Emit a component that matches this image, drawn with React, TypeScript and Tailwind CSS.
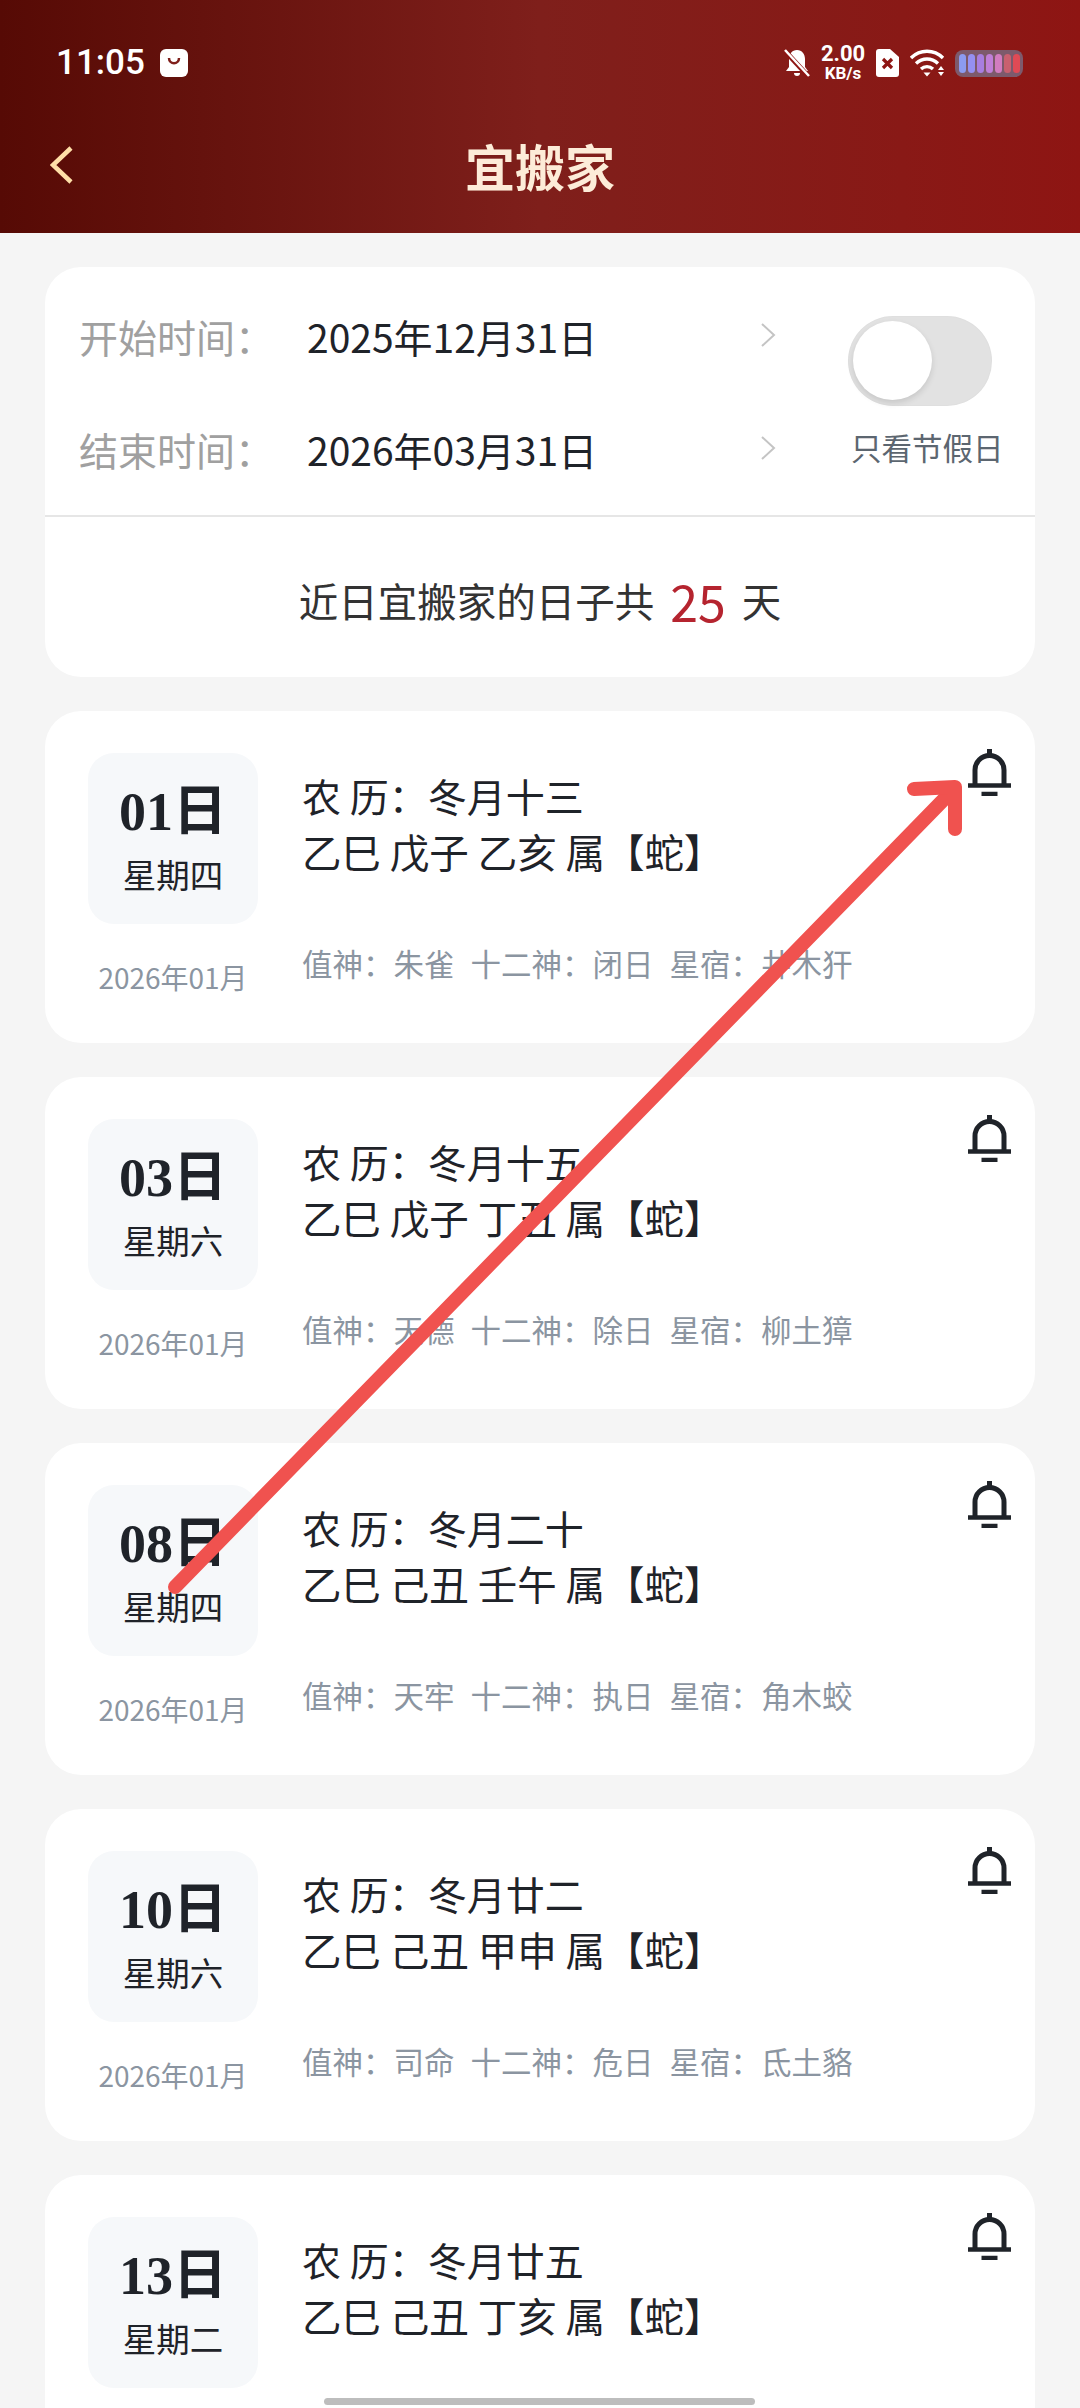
import React from 'react';

const days = [
  { day: '01日', week: '星期四', lunar: '冬月十三', ganzhi: '乙巳 戊子 乙亥 属【蛇】', shen: '朱雀', twelve: '闭日', star: '井木犴' },
  { day: '03日', week: '星期六', lunar: '冬月十五', ganzhi: '乙巳 戊子 丁丑 属【蛇】', shen: '天德', twelve: '除日', star: '柳土獐' },
  { day: '08日', week: '星期四', lunar: '冬月二十', ganzhi: '乙巳 己丑 壬午 属【蛇】', shen: '天牢', twelve: '执日', star: '角木蛟' },
  { day: '10日', week: '星期六', lunar: '冬月廿二', ganzhi: '乙巳 己丑 甲申 属【蛇】', shen: '司命', twelve: '危日', star: '氐土貉' },
  { day: '13日', week: '星期二', lunar: '冬月廿五', ganzhi: '乙巳 己丑 丁亥 属【蛇】', shen: '', twelve: '', star: '' },
];

function BellIcon() {
  return (
    <svg width="45" height="47" viewBox="0 0 45 47" fill="none" stroke="#1f2329" strokeWidth="5">
      <path d="M22.5 0v6" />
      <path d="M8 36V21a14.500 14.500 0 0 1 29 0v15" />
      <path d="M1 36.500h43" strokeWidth="4.500" />
      <path d="M14.500 45h16" strokeWidth="4.500" />
    </svg>
  );
}

function Chevron() {
  return (
    <svg width="16" height="24" viewBox="0 0 16 24" fill="none" stroke="#c4c4c4" strokeWidth="2">
      <path d="M2 1l12 11L2 23" />
    </svg>
  );
}

function StatusIcons() {
  return (
    <div className="flex items-center h-[36px]">
      {/* bell muted */}
      <svg width="26" height="29" viewBox="0 0 26 29" fill="#fff">
        <path d="M13 1c5 0 8 4 8 9v8l3 4H2l3-4v-8c0-5 3-9 8-9z" />
        <path d="M10 24h6a3 3 0 0 1-6 0z" />
        <path d="M1 2l24 26" stroke="#8e1513" strokeWidth="5" />
        <path d="M1 1l24 26" stroke="#fff" strokeWidth="2.5" />
      </svg>
      <div className="ml-[10px] w-[46px] flex flex-col items-center font-['Roboto',sans-serif] font-bold text-white">
        <span className="text-[22px] leading-[20px]">2.00</span>
        <span className="text-[17px] leading-[18px]">KB/s</span>
      </div>
      {/* sim */}
      <svg className="ml-[10px]" width="23" height="28" viewBox="0 0 23 28">
        <path d="M3 0h11l9 8v17a3 3 0 0 1-3 3H3a3 3 0 0 1-3-3V3a3 3 0 0 1 3-3z" fill="#fff" />
        <path d="M7 10l9 9M16 10l-9 9" stroke="#8e1513" strokeWidth="3.2" />
      </svg>
      {/* wifi */}
      <svg className="ml-[11px]" width="36" height="28" viewBox="0 0 36 28" fill="none" stroke="#fff" strokeWidth="3.4">
        <path d="M1 9C10 0 24 0 33 9" />
        <path d="M6 14.500c6.500-6 15.500-6 22 0" />
        <path d="M11 20c3.500-3.200 8.500-3.200 12 0" />
        <path d="M13.500 23.500h7l-3.500 4z" fill="#fff" stroke="none" />
        <path d="M28 21l3-4 3 4zM28 23l3 4 3-4z" fill="#fff" stroke="none" />
      </svg>
      {/* battery */}
      <div className="ml-[9px] w-[68px] h-[27px] rounded-[8px] bg-[#7d5a6c] flex items-center justify-center gap-[2px]">
        {['#8c9bf0', '#9590f2', '#a87ee0', '#c07fd8', '#d27cc0', '#c9606f', '#e04a55'].map((c) => (
          <span key={c} className="w-[7px] h-[19px] rounded-[3.500px]" style={{ backgroundColor: c }} />
        ))}
      </div>
    </div>
  );
}

function DayCard({ item }: { item: (typeof days)[number] }) {
  return (
    <div className="bg-white rounded-[36px] h-[332px] shrink-0 pl-[43px] pr-[23px] pt-[42px] flex items-start">
      <div className="w-[170px] shrink-0 flex flex-col items-center">
        <div className="w-[170px] h-[171px] rounded-[26px] bg-[#f6f8fa] pt-[29px] flex flex-col items-center">
          <div className="h-[60px] leading-[60px] text-[54px] font-bold text-[#1f2329] font-['Liberation_Serif','Noto_Sans_CJK_SC',serif]">
            {item.day}
          </div>
          <div className="mt-[12px] h-[40px] leading-[40px] text-[33.500px] text-[#1f2329]">{item.week}</div>
        </div>
        {item.shen && (
          <div className="mt-[33px] h-[40px] leading-[40px] text-[28px] text-[#8b95a1] whitespace-nowrap">2026年01月</div>
        )}
      </div>
      <div className="ml-[44px] pt-[15px] flex-1">
        <div className="text-[39px] leading-[55px] text-[#1f2329] whitespace-pre">农 历：{item.lunar}</div>
        <div className="text-[39.500px] leading-[55px] text-[#1f2329] whitespace-pre">{item.ganzhi}</div>
        {item.shen && (
          <div className="mt-[65px] flex gap-[16px] text-[30.500px] leading-[40px] text-[#8b95a1] whitespace-nowrap">
            <span>值神：{item.shen}</span>
            <span>十二神：{item.twelve}</span>
            <span>星宿：{item.star}</span>
          </div>
        )}
      </div>
      <div className="mt-[-4px] shrink-0">
        <BellIcon />
      </div>
    </div>
  );
}

export default function App() {
  return (
    <div className="relative w-[1080px] h-[2408px] overflow-hidden bg-[#f5f5f5] font-['Noto_Sans_CJK_SC',sans-serif]">
      {/* Header */}
      <div className="h-[233px] bg-gradient-to-r from-[#560a05] via-[#7f1f1b] to-[#8e1513]">
        <div className="h-[126px] pl-[56px] pr-[57px] pt-[45px] flex items-start justify-between">
          <div className="flex items-center h-[36px]">
            <span className="text-[35px] leading-[36px] font-medium text-white font-['Roboto',sans-serif]">11:05</span>
            <svg className="ml-[15px]" width="28" height="28" viewBox="0 0 28 28">
              <rect width="28" height="28" rx="6" fill="#fff" />
              <path d="M9 9c0 7 10 7 10 0" fill="none" stroke="#7f1f1b" strokeWidth="2.500" />
            </svg>
          </div>
          <StatusIcons />
        </div>
        <div className="flex items-center pl-[50px] h-[78px]">
          <svg width="24" height="38" viewBox="0 0 24 38" fill="none" stroke="#ffdfa8" strokeWidth="4.500">
            <path d="M21 2L3 19l18 17" />
          </svg>
          <span className="ml-[391px] text-[50px] leading-[72px] font-bold text-[#fdecd8]">宜搬家</span>
        </div>
      </div>

      {/* List */}
      <div className="px-[45px] pt-[34px] flex flex-col gap-[34px]">
        <div className="bg-white rounded-[36px] h-[410px] shrink-0">
          <div className="h-[250px] border-b-2 border-[#e6e6e6] pl-[34px] flex items-start">
            <div className="w-[697px] pt-[44px]">
              <div className="h-[50px] flex items-center">
                <span className="w-[228px] text-[39px] leading-[50px] text-[#a0a0a0]">开始时间：</span>
                <span className="w-[453px] text-[39px] leading-[50px] text-[#1f2329]">2025年12月31日</span>
                <div className="mt-[-3px]"><Chevron /></div>
              </div>
              <div className="mt-[63px] h-[50px] flex items-center">
                <span className="w-[228px] text-[39px] leading-[50px] text-[#a0a0a0]">结束时间：</span>
                <span className="w-[453px] text-[39px] leading-[50px] text-[#1f2329]">2026年03月31日</span>
                <div className="mt-[-3px]"><Chevron /></div>
              </div>
            </div>
            <div className="ml-[72px] pt-[49px] flex flex-col items-start">
              <div className="w-[144px] h-[90px] rounded-full bg-[#e2e2e2] p-[5px] shadow-[inset_0_0_2px_rgba(0,0,0,0.05)]">
                <div className="w-[79px] h-[79px] rounded-full bg-white shadow-[0_3px_6px_rgba(0,0,0,0.12)]" />
              </div>
              <span className="mt-[21px] ml-[3px] text-[30.500px] leading-[40px] text-[#5c6670] whitespace-nowrap">只看节假日</span>
            </div>
          </div>
          <div className="h-[158px] pt-[8px] flex items-center justify-center text-[39.500px] text-[#333333]">
            <span>近日宜搬家的日子共</span>
            <span className="mx-[16px] text-[50px] leading-[60px] text-[#b5242f]">25</span>
            <span>天</span>
          </div>
        </div>

        {days.map((d) => (
          <DayCard key={d.day} item={d} />
        ))}
      </div>

      {/* Annotation arrow */}
      <svg className="absolute left-0 top-0 pointer-events-none" width="1080" height="2408" fill="none" stroke="#f0524f" strokeWidth="14" strokeLinecap="round" strokeLinejoin="round">
        <path d="M175 1587L953 790" />
        <path d="M914 789L955 787L955 829" />
      </svg>

      {/* Home indicator */}
      <div className="absolute left-[324px] bottom-[3px] w-[431px] h-[7px] rounded-full bg-[#bdbdbd]" />
    </div>
  );
}
